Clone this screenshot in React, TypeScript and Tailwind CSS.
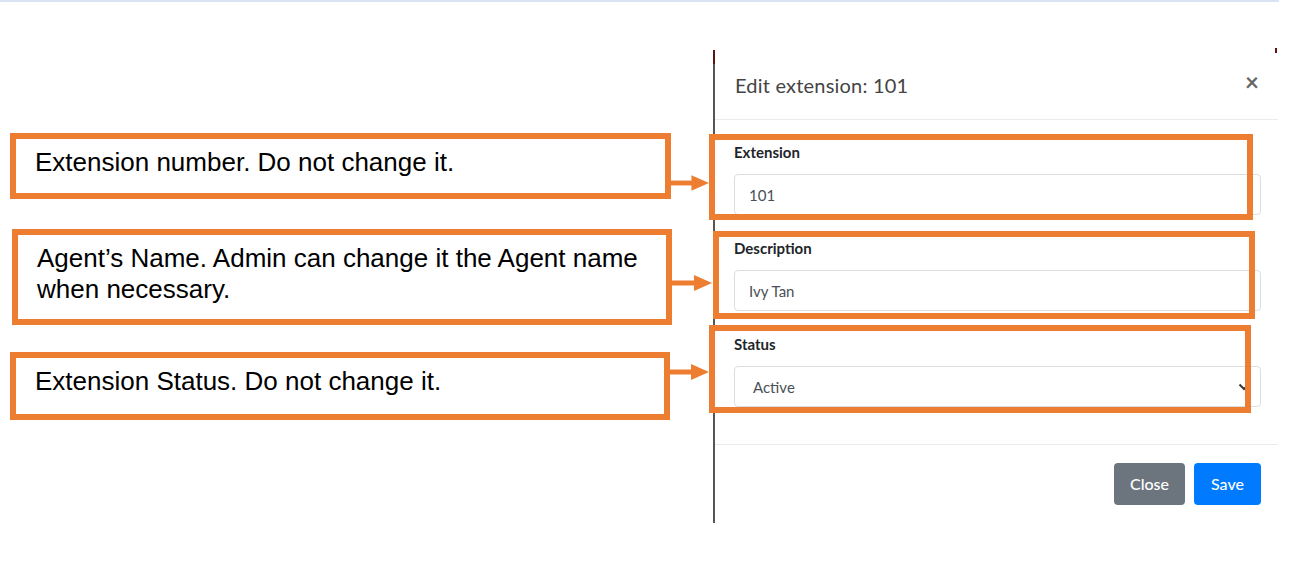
import React from "react";

const callouts = [
  { text: "Extension number. Do not change it.", box: "ml-[10px] w-[661px] h-[66px] mt-[131px]" },
  { text: "Agent’s Name. Admin can change it the Agent name when necessary.", box: "ml-[12px] w-[660px] h-[96px] mt-[30px]" },
  { text: "Extension Status. Do not change it.", box: "ml-[10px] w-[660px] h-[68px] mt-[27px]" },
];

function Arrow({ className }: { className: string }) {
  return (
    <svg className={className} width="40" height="16" viewBox="0 0 40 16">
      <rect x="0" y="5.5" width="23" height="5" fill="#ed7d31" />
      <polygon points="22,0 40,8 22,16" fill="#ed7d31" />
    </svg>
  );
}

function Field({ label, value, select }: { label: string; value: string; select?: boolean }) {
  return (
    <div className="flex flex-col">
      <label className="h-[20px] text-[15px] leading-[20px] font-bold text-[#212529]">{label}</label>
      <div className="mt-[12px] h-[41px] flex items-center justify-between border border-[#dadfe4] rounded-[4px] bg-white pr-[10px]">
        <span className={`text-[15px] text-[#495057] pt-[2px] ${select ? "pl-[18px]" : "pl-[14px]"}`}>{value}</span>
        {select && (
          <svg width="12" height="8" viewBox="0 0 12 8">
            <path d="M1.5 1.5 L6 6 L10.5 1.5" fill="none" stroke="#343a40" strokeWidth="2" />
          </svg>
        )}
      </div>
    </div>
  );
}

export default function App() {
  return (
    <div className="relative w-[1290px] h-[580px] bg-white overflow-hidden">
      <div className="h-[2px] w-[1279px] bg-[#dae3f3]" />
      <div className="flex">
        <div className="w-[713px] flex flex-col" style={{ fontFamily: '"Liberation Sans", Arial, sans-serif' }}>
          {callouts.map((c) => (
            <div
              key={c.text}
              className={`${c.box} border-[6px] border-[#ed7d31] pl-[19px] pr-[10px] pt-[8px] text-[26px] leading-[31px] text-black`}
            >
              {c.text}
            </div>
          ))}
        </div>

        <div
          className="relative mt-[48px] w-[565px] h-[473px] border-l-2 border-[#555555] flex flex-col bg-white"
          style={{ fontFamily: "Lato, 'Noto Sans', sans-serif" }}
        >
          <div className="absolute -left-[2px] top-0 w-[2px] h-[14px] bg-[#5c1414]" />
          <div className="absolute right-[1px] -top-[2px] w-[2px] h-[5px] bg-[#5c1414]" />
          <div className="h-[70px] flex items-center justify-between pl-[20px] pr-[19px] border-b border-[#e9ecef]">
            <span className="text-[20px] text-[#444] pt-[1px] tracking-[0.2px]">Edit extension: 101</span>
            <span className="text-[24px] leading-none font-bold text-[#666] -mt-[6px]">×</span>
          </div>
          <div className="pl-[19px] pr-[17px] pt-[22px] pb-[37px] flex flex-col gap-[23px] border-b border-[#e9ecef]">
            <Field label="Extension" value="101" />
            <Field label="Description" value="Ivy Tan" />
            <Field label="Status" value="Active" select />
          </div>
          <div className="flex justify-end gap-[9px] pr-[17px] pt-[18px]">
            <button className="w-[71px] h-[42px] rounded-[4px] bg-[#6c757d] text-white text-[16px] font-medium">Close</button>
            <button className="w-[67px] h-[42px] rounded-[4px] bg-[#007bff] text-white text-[16px] font-medium">Save</button>
          </div>
        </div>
      </div>

      <div className="absolute left-[709px] top-[134px] w-[544px] h-[86px] border-[6px] border-[#ed7d31]" />
      <div className="absolute left-[713px] top-[231px] w-[542px] h-[88px] border-[6px] border-[#ed7d31]" />
      <div className="absolute left-[709px] top-[325px] w-[542px] h-[88px] border-[6px] border-[#ed7d31]" />

      <Arrow className="absolute left-[670px] top-[175px] w-[39px]" />
      <Arrow className="absolute left-[671px] top-[275px] w-[42px]" />
      <Arrow className="absolute left-[669px] top-[364px] w-[40px]" />
    </div>
  );
}
